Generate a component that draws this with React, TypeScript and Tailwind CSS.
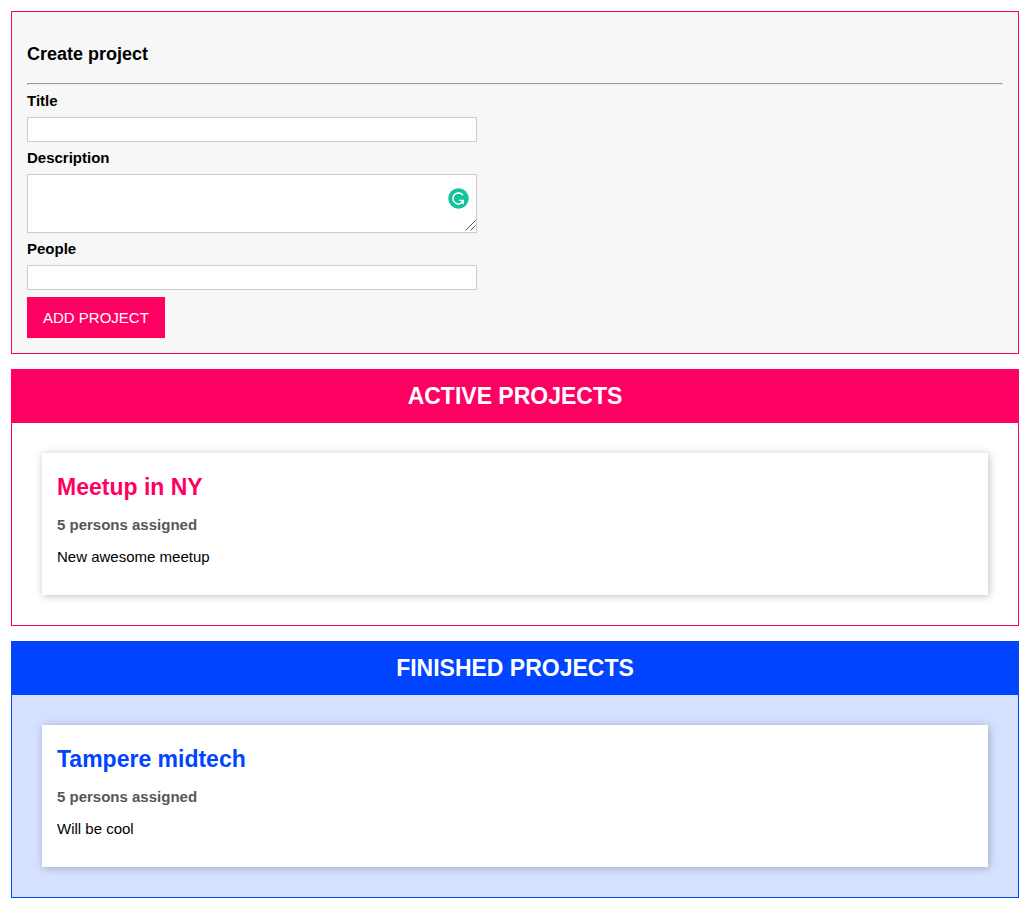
import React from "react";

type Project = { title: string; people: number; description: string };

const themes = {
  active: {
    border: "border-[#ff0062]",
    header: "bg-[#ff0062]",
    title: "text-[#ff0062]",
    body: "bg-white",
  },
  finished: {
    border: "border-[#0044ff]",
    header: "bg-[#0044ff]",
    title: "text-[#0044ff]",
    body: "bg-[#d6e1ff]",
  },
};

const fieldClass =
  "block w-full max-w-[450px] border border-[#cccccc] bg-white px-1 outline-none";
const labelClass = "block text-[15px] font-bold leading-8";

function AssistantBadge() {
  return (
    <svg
      className="pointer-events-none absolute right-2 top-[14px] h-[21px] w-[21px]"
      viewBox="0 0 21 21"
      fill="none"
      aria-hidden="true"
    >
      <circle cx="10.5" cy="10.5" r="10.2" fill="#15c39a" />
      <path
        d="M14.6 6.8A5.5 5.5 0 1 0 13.6 15"
        stroke="#fff"
        strokeWidth="1.5"
        strokeLinecap="round"
      />
      <path d="M10.9 12.4H15.2V16.2M15 12.6L12.8 15" stroke="#fff" strokeWidth="1.4" />
    </svg>
  );
}

function ResizeGrip() {
  return (
    <svg
      className="pointer-events-none absolute bottom-[2px] right-px h-[11px] w-[11px]"
      viewBox="0 0 11 11"
      fill="none"
      aria-hidden="true"
    >
      <path d="M0.5 10.5L10.5 0.5M5.5 10.5L10.5 5.5" stroke="#555" strokeWidth="1" />
    </svg>
  );
}

function ProjectForm() {
  return (
    <form
      className="border border-[#ff0062] bg-[#f7f7f7] p-[15px]"
      onSubmit={(e) => e.preventDefault()}
    >
      <h2 className="pb-[2px] text-[18px] font-bold leading-[54px]">Create project</h2>
      <hr className="h-[2px] border border-b-[#eeeeee] border-l-[#9a9a9a] border-r-[#eeeeee] border-t-[#9a9a9a]" />
      <label htmlFor="title" className={labelClass}>
        Title
      </label>
      <input id="title" type="text" className={`${fieldClass} h-[25px]`} />
      <label htmlFor="description" className={labelClass}>
        Description
      </label>
      <div className="relative max-w-[450px]">
        <textarea
          id="description"
          className={`${fieldClass} h-[59px] resize-y [&::-webkit-resizer]:bg-white`}
        />
        <AssistantBadge />
        <ResizeGrip />
      </div>
      <label htmlFor="people" className={labelClass}>
        People
      </label>
      <input id="people" type="number" className={`${fieldClass} h-[25px]`} />
      <button
        type="submit"
        className="mt-[7px] block bg-[#ff0062] px-4 text-[15px] leading-[41px] text-white"
      >
        ADD PROJECT
      </button>
    </form>
  );
}

function ProjectList({
  heading,
  theme,
  projects,
}: {
  heading: string;
  theme: keyof typeof themes;
  projects: Project[];
}) {
  const t = themes[theme];
  return (
    <section className={`border ${t.border} ${t.body}`}>
      <header className={`${t.header} pb-px text-center`}>
        <h2 className="text-[23px] font-bold leading-[52px] text-white">{heading}</h2>
      </header>
      <ul className="flex flex-col gap-4 p-[30px]">
        {projects.map((p) => (
          <li
            key={p.title}
            className="bg-white px-[15px] pb-[22px] pt-[15px] shadow-[1px_1px_8px_rgba(0,0,0,0.26)]"
          >
            <h3 className={`pb-[3px] text-[23px] font-bold leading-[38px] ${t.title}`}>
              {p.title}
            </h3>
            <p className="text-[15px] font-bold leading-8 text-[#575757]">
              {p.people} persons assigned
            </p>
            <p className="text-[15px] leading-8">{p.description}</p>
          </li>
        ))}
      </ul>
    </section>
  );
}

export default function App() {
  return (
    <main className="flex flex-col gap-[15px] bg-white py-[11px] pl-[11px] pr-[13px] font-['Liberation_Sans',Arial,sans-serif] text-black">
      <ProjectForm />
      <ProjectList
        heading="ACTIVE PROJECTS"
        theme="active"
        projects={[{ title: "Meetup in NY", people: 5, description: "New awesome meetup" }]}
      />
      <ProjectList
        heading="FINISHED PROJECTS"
        theme="finished"
        projects={[{ title: "Tampere midtech", people: 5, description: "Will be cool" }]}
      />
    </main>
  );
}
